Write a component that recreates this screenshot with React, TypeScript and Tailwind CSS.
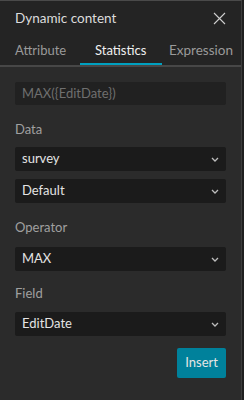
import React, { useState } from 'react';

const font = { fontFamily: 'Lato, "Open Sans", sans-serif' };

function Chevron() {
  return (
    <svg width="8" height="5" viewBox="0 0 8 5" className="text-[#bdbdbd]">
      <path d="M1 1l3 3 3-3" fill="none" stroke="currentColor" strokeWidth="1.3" />
    </svg>
  );
}

function Select({ value }: { value: string }) {
  return (
    <div className="flex h-[24px] items-center justify-between rounded-[2px] bg-[#1b1b1b] pl-[7px] pr-[7px] text-[13px] text-[#e4e4e4]">
      <span>{value}</span>
      <Chevron />
    </div>
  );
}

export default function App() {
  const [tab, setTab] = useState('Statistics');
  const tabs = ['Attribute', 'Statistics', 'Expression'];

  return (
    <div className="flex h-[400px] w-[244px] bg-[#1f1f1f]" style={font}>
      <div className="flex w-[242px] flex-col border-r border-t border-r-[#3c3c3c] border-t-[#4a4a4a] bg-[#2b2b2b]">
        <div className="bg-[#242424]">
          <div className="flex h-[35px] items-center justify-between pl-[15px] pr-[15px]">
            <span className="text-[13.5px] text-[#dcdcdc]">Dynamic content</span>
            <svg width="13" height="13" viewBox="0 0 13 13" className="text-[#cfcfcf]">
              <path d="M1 1l11 11M12 1L1 12" stroke="currentColor" strokeWidth="1.1" />
            </svg>
          </div>
          <div className="flex h-[31px] items-stretch border-b-2 border-[#474747] text-[13px]">
            {tabs.map((t) => (
              <button
                key={t}
                onClick={() => setTab(t)}
                className={`relative flex items-center whitespace-nowrap ${
                  t === 'Attribute' ? 'w-[80px] pl-[15px]' : t === 'Statistics' ? 'w-[82px] pl-[15px]' : 'pl-[7px] text-[13.5px]'
                } ${tab === t ? 'text-[#f0f0f0]' : 'text-[#9a9a9a]'}`}
              >
                {t}
                {tab === t && (
                  <span className="absolute bottom-[0px] left-0 right-0 h-[2px] bg-[#00a0c0]" />
                )}
              </button>
            ))}
          </div>
        </div>

        <div className="flex flex-col px-[15px] pt-[15px]">
          <div className="flex h-[23px] items-center rounded-[2px] bg-[#212121] px-[7px] text-[13px] text-[#6f6f6f]">
            MAX({'{'}EditDate{'}'})
          </div>

          <div className="mt-[14px] mb-[8px] h-[20px] text-[13px] leading-[20px] text-[#a0a0a0]">Data</div>
          <div className="flex flex-col gap-[8px]">
            <Select value="survey" />
            <Select value="Default" />
          </div>

          <div className="mt-[14px] mb-[10px] h-[20px] text-[13px] leading-[20px] text-[#a0a0a0]">Operator</div>
          <Select value="MAX" />

          <div className="mt-[12px] mb-[9px] h-[20px] text-[13px] leading-[20px] text-[#a0a0a0]">Field</div>
          <Select value="EditDate" />

          <div className="mt-[12px] flex justify-end">
            <button className="h-[30px] rounded-[2px] bg-[#00819b] px-[8px] text-[13px] text-[#e6e6e6]">
              Insert
            </button>
          </div>
        </div>
      </div>
    </div>
  );
}
